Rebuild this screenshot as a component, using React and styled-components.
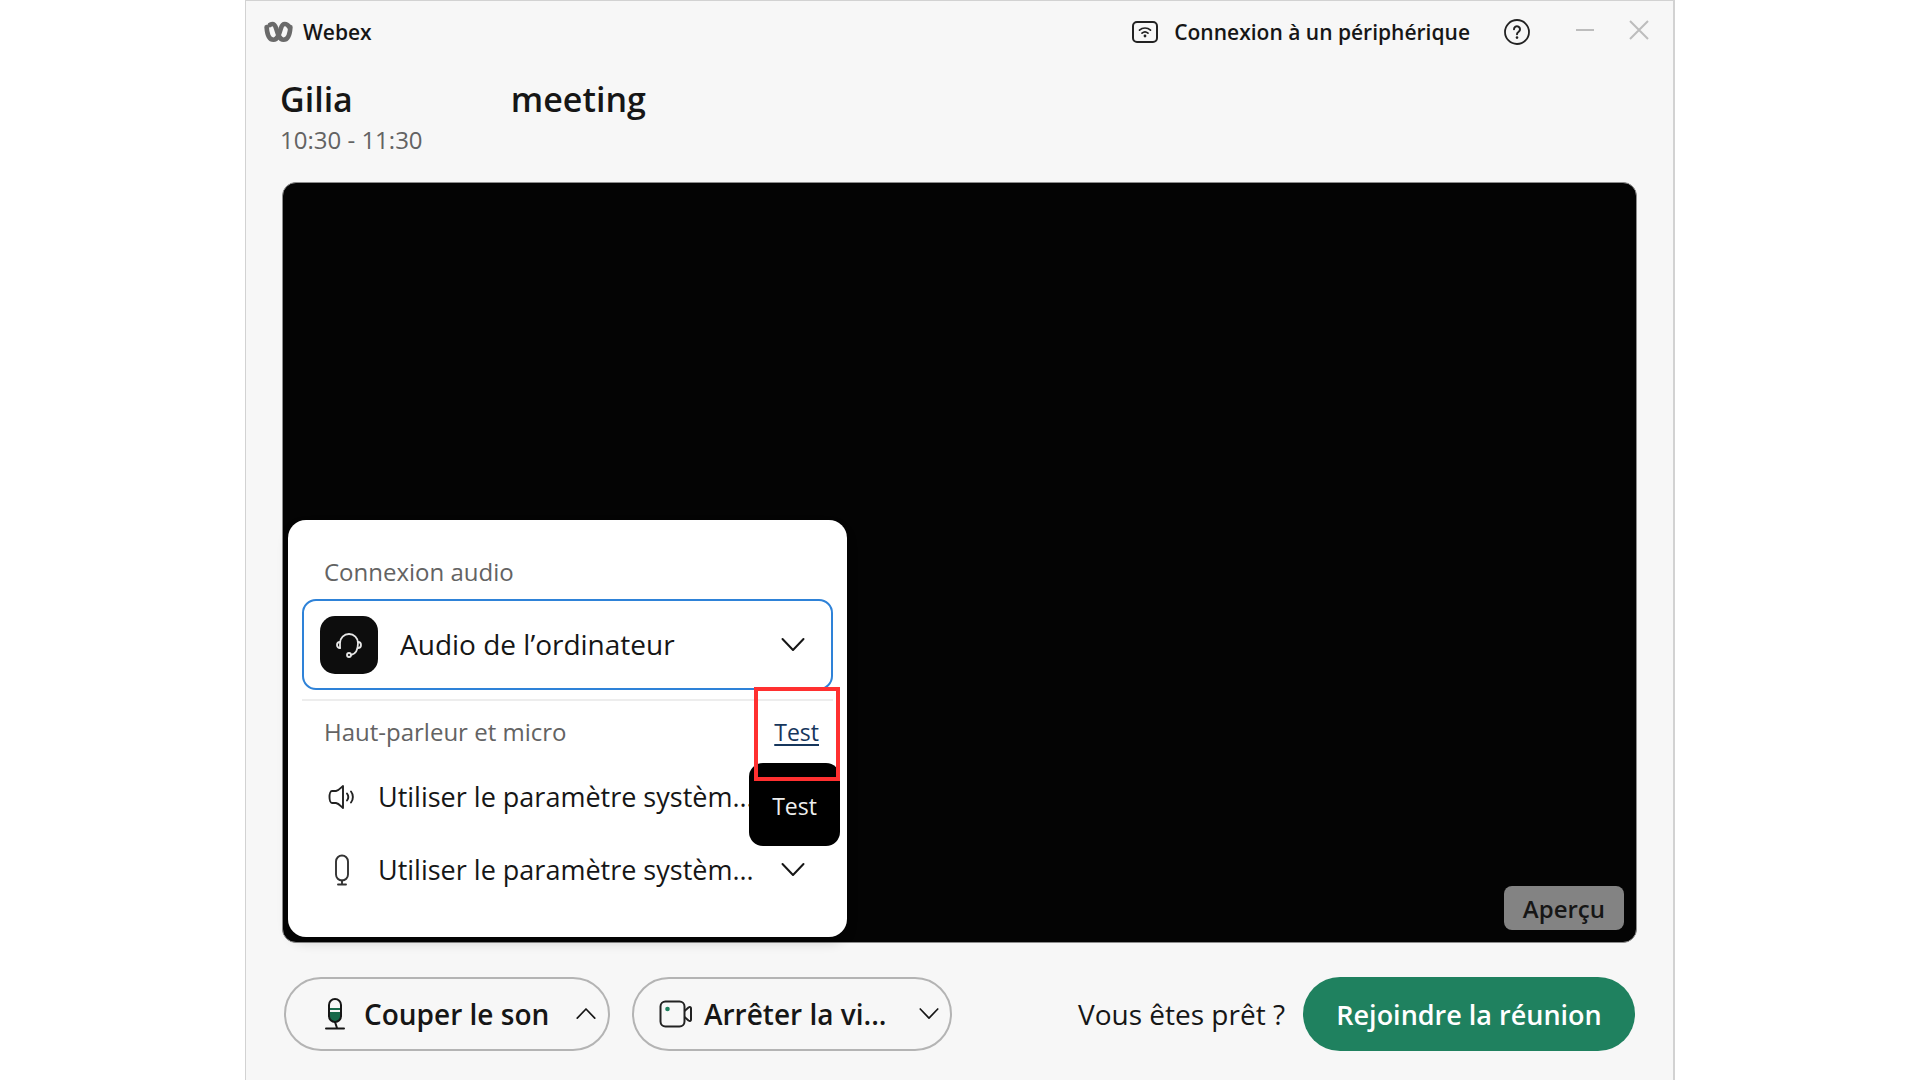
import styled, { createGlobalStyle } from "styled-components";

const GlobalStyle = createGlobalStyle`
  * {
    box-sizing: border-box;
  }
  body {
    margin: 0;
    background: #fff;
    color: #161616;
    font-family: "Open Sans", "Noto Sans", sans-serif;
  }
  button,
  select {
    margin: 0;
    padding: 0;
    border: none;
    background: none;
    color: inherit;
    font: inherit;
    cursor: pointer;
  }
  svg {
    display: block;
    flex: none;
  }
`;

const Page = styled.div`
  min-height: 100vh;
  padding: 0 245px;
  display: flex;
`;

const Window = styled.main`
  flex: 1;
  min-width: 0;
  display: flex;
  flex-direction: column;
  background: #f7f7f7;
  border: 2px solid #d2d2d2;
  border-width: 1px 2px 0 1px;
`;

const TitleBar = styled.header`
  height: 62px;
  padding: 0 24px 0 18px;
  display: flex;
  align-items: center;
`;

const Brand = styled.div`
  display: flex;
  align-items: center;
  gap: 10px;
  margin-right: auto;
  font-size: 21px;
  font-weight: 600;
`;

const DeviceButton = styled.button`
  display: flex;
  align-items: center;
  gap: 16px;
  margin-right: 34px;
  font-size: 21px;
  font-weight: 600;
`;

const WindowControls = styled.div`
  display: flex;
  gap: 34px;
  margin-left: 45px;
  padding-bottom: 4px;
  color: #bdbdbd;
`;

const Heading = styled.section`
  padding: 10px 34px 27px;
`;

const Title = styled.h1`
  margin: 0;
  display: flex;
  gap: 158px;
  font-size: 34px;
  font-weight: 600;
  line-height: 52px;
`;

const Time = styled.p`
  margin: 0;
  font-size: 24px;
  line-height: 30px;
  color: #636363;
`;

const Preview = styled.section`
  position: relative;
  flex: 1;
  margin: 0 36px;
  min-height: 480px;
  background: #040404;
  border: 1px solid #8c8c8c;
  border-radius: 14px;
`;

const PreviewBadge = styled.span`
  position: absolute;
  right: 12px;
  bottom: 12px;
  height: 44px;
  padding: 0 19px;
  border-radius: 8px;
  background: #838383;
  font-size: 24px;
  font-weight: 600;
  line-height: 46px;
`;

const AudioMenu = styled.div`
  position: absolute;
  left: 5px;
  bottom: 5px;
  width: 559px;
  height: 417px;
  padding: 35px 14px 0;
  background: #fff;
  border-radius: 18px;
  box-shadow: 0 6px 12px rgba(0, 0, 0, 0.14);
`;

const MenuLabel = styled.div`
  display: flex;
  justify-content: space-between;
  padding: 0 14px 0 22px;
  font-size: 24px;
  line-height: 34px;
  color: #636363;
`;

const Select = styled.select`
  flex: 1;
  min-width: 0;
  height: 48px;
  appearance: none;
  outline: none;
`;

const AudioSource = styled.label`
  display: flex;
  align-items: center;
  height: 91px;
  margin-top: 10px;
  padding: 0 26px 0 16px;
  border: 2px solid #2e82d8;
  border-radius: 14px;
  font-size: 28px;

  ${Select} {
    padding-bottom: 2px;
  }
`;

const SourceIcon = styled.span`
  display: grid;
  place-items: center;
  width: 58px;
  height: 58px;
  margin-right: 22px;
  border-radius: 15px;
  background: #0d0d0d;
  color: #e6e6e6;
`;

const Divider = styled.hr`
  height: 2px;
  margin: 9px 0 14px;
  border: none;
  background: #ededed;
`;

const TestLink = styled.a`
  color: #16365c;
  font-size: 23px;
  text-underline-offset: 3px;
  text-decoration-thickness: 2px;
`;

const DeviceList = styled.div`
  padding-top: 11px;
`;

const DeviceRow = styled.label`
  display: flex;
  align-items: center;
  height: 73px;
  padding: 0 28px 0 24px;
  font-size: 27px;
`;

const RowIcon = styled.span`
  display: grid;
  place-items: center;
  width: 32px;
  margin-right: 20px;
`;

const Tooltip = styled.span`
  position: absolute;
  right: 7px;
  top: 243px;
  width: 91px;
  height: 83px;
  border-radius: 14px;
  background: #000;
  color: #eee;
  font-size: 23px;
  line-height: 86px;
  text-align: center;
`;

const Highlight = styled.span`
  position: absolute;
  right: 7px;
  top: 167px;
  width: 86px;
  height: 94px;
  border: 4px solid #ff3030;
  pointer-events: none;
`;

const Footer = styled.footer`
  display: flex;
  align-items: center;
  gap: 22px;
  padding: 34px 38px 29px;
`;

const Pill = styled.div`
  display: flex;
  align-items: center;
  justify-content: space-between;
  width: ${(props) => props.$width};
  height: 74px;
  padding: ${(props) => props.$padding};
  border: 2px solid #b4b4b4;
  border-radius: 37px;
`;

const PillAction = styled.button`
  display: flex;
  align-items: center;
  gap: ${(props) => props.$gap};
  font-size: 28px;
  font-weight: 600;
`;

const JoinArea = styled.div`
  display: flex;
  align-items: center;
  gap: 18px;
  margin-left: auto;
  font-size: 28px;
`;

const JoinButton = styled.button`
  width: 332px;
  height: 74px;
  border-radius: 37px;
  background: #1f815f;
  color: #fff;
  font-size: 27px;
  font-weight: 600;
`;

function Chevron({ size = 24, up }) {
  return (
    <svg
      width={size}
      height={size}
      viewBox="0 0 24 24"
      fill="none"
      stroke="currentColor"
      strokeWidth="2"
      strokeLinecap="round"
      strokeLinejoin="round"
    >
      <path d={up ? "M1.500 17 12 6l10.500 11" : "M1.500 6 12 17 22.500 6"} />
    </svg>
  );
}

function WebexLogo() {
  return (
    <svg width="29" height="22" viewBox="0 0 29 22" fill="none" stroke="#6a6a6a" strokeWidth="4.600" strokeLinecap="round">
      <path d="M2.600 6C3 12 5 18.700 9.500 18.700S15.500 12 17 7c.8-2.700 1.800-4 3.800-4 1.700 0 3 .8 4 2.500" />
      <path d="M26.400 6C26 12 24 18.700 19.500 18.700S13.500 12 12 7c-.8-2.700-1.800-4-3.800-4-1 0-1.700.3-2.400 1" />
    </svg>
  );
}

function CastIcon() {
  return (
    <svg width="26" height="22" viewBox="0 0 26 22" fill="none" stroke="#222" strokeWidth="2" strokeLinecap="round">
      <rect x="1" y="1" width="24" height="20" rx="4" />
      <path d="M7.500 9.200a8 8 0 0 1 11 0M10 12.200a4.500 4.500 0 0 1 6 0" strokeWidth="1.700" />
      <circle cx="13" cy="15" r="1.400" fill="#222" stroke="none" />
    </svg>
  );
}

function HelpIcon() {
  return (
    <svg width="26" height="26" viewBox="0 0 26 26" fill="none" stroke="#222" strokeWidth="1.800" strokeLinecap="round">
      <circle cx="13" cy="13" r="12" />
      <path d="M10 10.200a3 3 0 1 1 4.700 2.500c-1 .7-1.700 1.200-1.700 2.500" strokeWidth="2" />
      <circle cx="13" cy="18.600" r="1.300" fill="#222" stroke="none" />
    </svg>
  );
}

function HeadsetIcon() {
  return (
    <svg width="28" height="28" viewBox="0 0 28 28" fill="none" stroke="currentColor" strokeWidth="1.800" strokeLinecap="round">
      <path d="M5 17v-5a9 9 0 0 1 18 0c0 7-2 11-7 12" />
      <path d="M5 17c-2 0-3-1.500-3-3s1-3 3-3M23 11c2 0 3 1.500 3 3s-1 3-3 3" />
      <circle cx="14" cy="24" r="2" />
    </svg>
  );
}

function SpeakerIcon() {
  return (
    <svg width="28" height="26" viewBox="0 0 28 26" fill="none" stroke="#222" strokeWidth="1.900" strokeLinecap="round" strokeLinejoin="round">
      <path d="M15 2v22c-2-1.500-4-4.500-7-5H4c-1.500 0-2.500-3-2.500-6S2.500 7 4 7h4c3-.5 5-3.500 7-5z" />
      <path d="M19 9.500c1.500 2 1.500 5 0 7M23 7.500c2.500 3 2.500 8 0 11" />
    </svg>
  );
}

function MicIcon() {
  return (
    <svg width="16" height="32" viewBox="0 0 16 32" fill="none" stroke="#333" strokeWidth="1.900" strokeLinecap="round">
      <rect x="2" y="1.500" width="12" height="25" rx="6" />
      <path d="M8 26.500v4M4 30.500h8" />
    </svg>
  );
}

function LiveMicIcon() {
  return (
    <svg width="22" height="34" viewBox="0 0 22 34" fill="none" stroke="#161616" strokeWidth="2" strokeLinecap="round">
      <path d="M5 15h12v4a6 6 0 0 1-12 0z" fill="#17694a" stroke="none" />
      <path d="M5 12h12" stroke="#17694a" strokeLinecap="butt" />
      <rect x="5" y="2" width="12" height="23" rx="6" />
      <path d="M11 25l2 6M2 31.500h18" />
    </svg>
  );
}

function CameraIcon() {
  return (
    <svg width="33" height="28" viewBox="0 0 33 28" fill="none" stroke="#222" strokeWidth="2" strokeLinejoin="round">
      <rect x="1.500" y="1.500" width="24" height="25" rx="5" />
      <path d="M25.500 11l4-3.500c1.500-1 2.500-.5 2.500 1v11c0 1.500-1 2-2.500 1l-4-3.500" />
      <circle cx="8.500" cy="9" r="2.300" fill="#1f815f" stroke="none" />
    </svg>
  );
}

function MenuPanel() {
  return (
    <AudioMenu>
      <MenuLabel>
        <span>Connexion audio</span>
      </MenuLabel>
      <AudioSource>
        <SourceIcon>
          <HeadsetIcon />
        </SourceIcon>
        <Select aria-label="Connexion audio">
          <option>Audio de l’ordinateur</option>
        </Select>
        <Chevron />
      </AudioSource>
      <Divider />
      <MenuLabel>
        <span>Haut-parleur et micro</span>
        <TestLink href="#test">Test</TestLink>
      </MenuLabel>
      <DeviceList>
        <DeviceRow>
          <RowIcon>
            <SpeakerIcon />
          </RowIcon>
          <Select aria-label="Haut-parleur">
            <option>Utiliser le paramètre systèm...</option>
          </Select>
        </DeviceRow>
        <DeviceRow>
          <RowIcon>
            <MicIcon />
          </RowIcon>
          <Select aria-label="Micro">
            <option>Utiliser le paramètre systèm...</option>
          </Select>
          <Chevron />
        </DeviceRow>
      </DeviceList>
      <Tooltip role="tooltip">Test</Tooltip>
      <Highlight />
    </AudioMenu>
  );
}

function App() {
  return (
    <Page>
      <GlobalStyle />
      <Window>
        <TitleBar>
          <Brand>
            <WebexLogo />
            <span>Webex</span>
          </Brand>
          <DeviceButton>
            <CastIcon />
            Connexion à un périphérique
          </DeviceButton>
          <button aria-label="Aide">
            <HelpIcon />
          </button>
          <WindowControls>
            <button aria-label="Réduire">
              <svg width="20" height="20" viewBox="0 0 20 20" stroke="currentColor" strokeWidth="2">
                <path d="M1 10h18" />
              </svg>
            </button>
            <button aria-label="Fermer">
              <svg width="20" height="20" viewBox="0 0 20 20" stroke="currentColor" strokeWidth="2">
                <path d="M1 1l18 18M19 1L1 19" />
              </svg>
            </button>
          </WindowControls>
        </TitleBar>
        <Heading>
          <Title>
            <span>Gilia</span>
            <span>meeting</span>
          </Title>
          <Time>10:30 - 11:30</Time>
        </Heading>
        <Preview>
          <PreviewBadge>Aperçu</PreviewBadge>
          <MenuPanel />
        </Preview>
        <Footer>
          <Pill $width="326px" $padding="0 12px 0 38px">
            <PillAction $gap="18px">
              <LiveMicIcon />
              Couper le son
            </PillAction>
            <button aria-label="Options audio">
              <Chevron size={20} up />
            </button>
          </Pill>
          <Pill $width="320px" $padding="0 11px 0 25px">
            <PillAction $gap="12px">
              <CameraIcon />
              Arrêter la vi...
            </PillAction>
            <button aria-label="Options vidéo">
              <Chevron size={20} />
            </button>
          </Pill>
          <JoinArea>
            <span>Vous êtes prêt ?</span>
            <JoinButton>Rejoindre la réunion</JoinButton>
          </JoinArea>
        </Footer>
      </Window>
    </Page>
  );
}

export default App;
